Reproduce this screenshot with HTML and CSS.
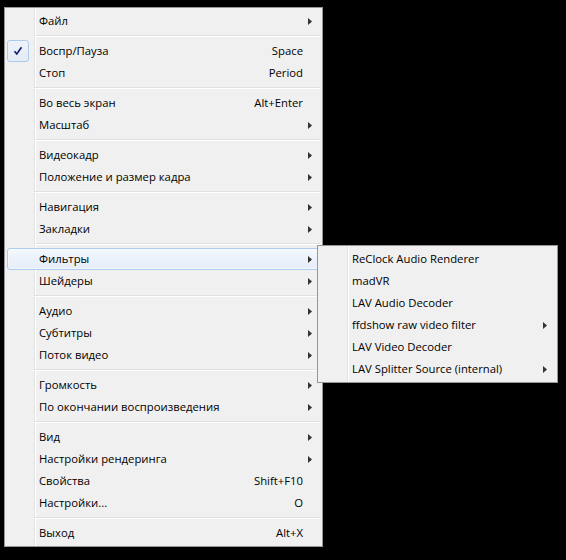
FILE: index.html
```html
<!DOCTYPE html>
<html lang="ru">
<head>
<meta charset="utf-8">
<link rel="stylesheet" href="styles.css">
</head>
<body>
<div class="desk">
  <div class="menu main">
    <div class="item"><span class="ic"></span><span class="lbl">Файл</span><span class="sub"><svg class="arr" viewBox="0 0 4 7"><path d="M0 0L4 3.5L0 7Z"/></svg></span></div>
    <div class="sep"></div>
    <div class="item"><span class="ic checked"><svg viewBox="0 0 10 10" class="tick"><path d="M1.5 5.2L3.8 8L8.5 1.2"/></svg></span><span class="lbl">Воспр/Пауза</span><span class="key">Space</span><span class="sub"></span></div>
    <div class="item"><span class="ic"></span><span class="lbl">Стоп</span><span class="key">Period</span><span class="sub"></span></div>
    <div class="sep"></div>
    <div class="item"><span class="ic"></span><span class="lbl">Во весь экран</span><span class="key">Alt+Enter</span><span class="sub"></span></div>
    <div class="item"><span class="ic"></span><span class="lbl">Масштаб</span><span class="sub"><svg class="arr" viewBox="0 0 4 7"><path d="M0 0L4 3.5L0 7Z"/></svg></span></div>
    <div class="sep"></div>
    <div class="item"><span class="ic"></span><span class="lbl">Видеокадр</span><span class="sub"><svg class="arr" viewBox="0 0 4 7"><path d="M0 0L4 3.5L0 7Z"/></svg></span></div>
    <div class="item"><span class="ic"></span><span class="lbl">Положение и размер кадра</span><span class="sub"><svg class="arr" viewBox="0 0 4 7"><path d="M0 0L4 3.5L0 7Z"/></svg></span></div>
    <div class="sep"></div>
    <div class="item"><span class="ic"></span><span class="lbl">Навигация</span><span class="sub"><svg class="arr" viewBox="0 0 4 7"><path d="M0 0L4 3.5L0 7Z"/></svg></span></div>
    <div class="item"><span class="ic"></span><span class="lbl">Закладки</span><span class="sub"><svg class="arr" viewBox="0 0 4 7"><path d="M0 0L4 3.5L0 7Z"/></svg></span></div>
    <div class="sep"></div>
    <div class="item hot"><span class="ic"></span><span class="lbl">Фильтры</span><span class="sub"><svg class="arr" viewBox="0 0 4 7"><path d="M0 0L4 3.5L0 7Z"/></svg></span></div>
    <div class="item"><span class="ic"></span><span class="lbl">Шейдеры</span><span class="sub"><svg class="arr" viewBox="0 0 4 7"><path d="M0 0L4 3.5L0 7Z"/></svg></span></div>
    <div class="sep"></div>
    <div class="item"><span class="ic"></span><span class="lbl">Аудио</span><span class="sub"><svg class="arr" viewBox="0 0 4 7"><path d="M0 0L4 3.5L0 7Z"/></svg></span></div>
    <div class="item"><span class="ic"></span><span class="lbl">Субтитры</span><span class="sub"><svg class="arr" viewBox="0 0 4 7"><path d="M0 0L4 3.5L0 7Z"/></svg></span></div>
    <div class="item"><span class="ic"></span><span class="lbl">Поток видео</span><span class="sub"><svg class="arr" viewBox="0 0 4 7"><path d="M0 0L4 3.5L0 7Z"/></svg></span></div>
    <div class="sep"></div>
    <div class="item"><span class="ic"></span><span class="lbl">Громкость</span><span class="sub"><svg class="arr" viewBox="0 0 4 7"><path d="M0 0L4 3.5L0 7Z"/></svg></span></div>
    <div class="item"><span class="ic"></span><span class="lbl">По окончании воспроизведения</span><span class="sub"><svg class="arr" viewBox="0 0 4 7"><path d="M0 0L4 3.5L0 7Z"/></svg></span></div>
    <div class="sep"></div>
    <div class="item"><span class="ic"></span><span class="lbl">Вид</span><span class="sub"><svg class="arr" viewBox="0 0 4 7"><path d="M0 0L4 3.5L0 7Z"/></svg></span></div>
    <div class="item"><span class="ic"></span><span class="lbl">Настройки рендеринга</span><span class="sub"><svg class="arr" viewBox="0 0 4 7"><path d="M0 0L4 3.5L0 7Z"/></svg></span></div>
    <div class="item"><span class="ic"></span><span class="lbl">Свойства</span><span class="key">Shift+F10</span><span class="sub"></span></div>
    <div class="item"><span class="ic"></span><span class="lbl">Настройки...</span><span class="key">O</span><span class="sub"></span></div>
    <div class="sep"></div>
    <div class="item"><span class="ic"></span><span class="lbl">Выход</span><span class="key">Alt+X</span><span class="sub"></span></div>
  </div>

  <div class="menu popup">
    <div class="item"><span class="ic"></span><span class="lbl">ReClock Audio Renderer</span><span class="sub"></span></div>
    <div class="item"><span class="ic"></span><span class="lbl">madVR</span><span class="sub"></span></div>
    <div class="item"><span class="ic"></span><span class="lbl">LAV Audio Decoder</span><span class="sub"></span></div>
    <div class="item"><span class="ic"></span><span class="lbl">ffdshow raw video filter</span><span class="sub"><svg class="arr" viewBox="0 0 4 7"><path d="M0 0L4 3.5L0 7Z"/></svg></span></div>
    <div class="item"><span class="ic"></span><span class="lbl">LAV Video Decoder</span><span class="sub"></span></div>
    <div class="item"><span class="ic"></span><span class="lbl">LAV Splitter Source (internal)</span><span class="sub"><svg class="arr" viewBox="0 0 4 7"><path d="M0 0L4 3.5L0 7Z"/></svg></span></div>
  </div>
</div>
</body>
</html>
```
FILE: styles.css
```css
html, body {
  margin: 0;
  padding: 0;
  background: #000;
}
body {
  width: 566px;
  height: 560px;
  overflow: hidden;
  font-family: "Open Sans", "Noto Sans", sans-serif;
  font-size: 11.3px;
  color: #000;
}
.desk {
  position: relative;
  padding: 7px 0 0 4px;
}
.menu {
  box-sizing: border-box;
  border: 1px solid #979797;
  padding: 2px;
  background:
    linear-gradient(to right, transparent 29px, #e2e3e3 29px, #e2e3e3 30px, #ffffff 30px, #ffffff 31px, transparent 31px),
    #f0f0f0;
}
.main {
  width: 319px;
}
.popup {
  position: absolute;
  left: 317px;
  top: 245px;
  width: 241px;
}
.item {
  display: flex;
  align-items: center;
  height: 22px;
  box-sizing: border-box;
  border: 1px solid transparent;
  border-radius: 3px;
  white-space: nowrap;
}
.item.hot {
  border-color: #aecbef;
  background: linear-gradient(#f4f8fd, #e4edf9);
  box-shadow: inset 0 0 0 1px rgba(255, 255, 255, 0.55);
}
.ic {
  flex: none;
  box-sizing: border-box;
  width: 22px;
  height: 22px;
  margin: -1px 10px -1px -1px;
  display: flex;
  align-items: center;
  justify-content: center;
}
.ic.checked {
  border: 1px solid #aecbef;
  border-radius: 3px;
  background: linear-gradient(#eef3fa, #e3ebf6);
}
.tick {
  width: 10px;
  height: 10px;
  fill: none;
  stroke: #0c1c6a;
  stroke-width: 1.6;
}
.lbl {
  flex: 1;
  margin-bottom: 2px;
}
.key {
  flex: none;
  margin-bottom: 2px;
}
.sub {
  flex: none;
  width: 16px;
  height: 20px;
  display: flex;
  align-items: center;
}
.arr {
  width: 4px;
  height: 7px;
  margin-left: 5px;
  fill: #333;
}
.sep {
  height: 8px;
  margin-left: 27px;
  background: linear-gradient(to bottom, transparent 3px, #e0e0e0 3px, #e0e0e0 4px, #ffffff 4px, #ffffff 5px, transparent 5px);
}
```
